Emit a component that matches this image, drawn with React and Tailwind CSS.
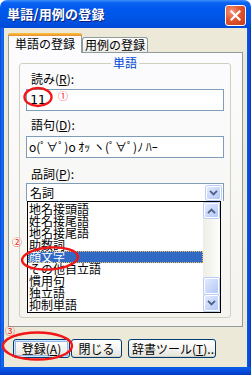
import React from "react";

function Chevron({ up }) {
  return (
    <svg width="9" height="6" viewBox="0 0 9 6">
      <path
        d={up ? "M1 5.2 L4.5 1.6 L8 5.2" : "M1 0.8 L4.5 4.4 L8 0.8"}
        fill="none"
        stroke="#4D6185"
        strokeWidth="1.8"
      />
    </svg>
  );
}

function XpBtn({ children, className }) {
  return (
    <div
      className={
        "flex items-center justify-center rounded-[2px] border border-white bg-gradient-to-br from-[#E2EAFE] to-[#B4C8F6] shadow-[0_0_0_1px_#B8CCF7] " +
        className
      }
    >
      {children}
    </div>
  );
}

function Button({ children, className, def }) {
  return (
    <div
      className={
        "h-[19px] flex items-center justify-center rounded-[3px] border border-[#003C74] bg-gradient-to-b from-[#FFFFFF] via-[#F5F4F0] to-[#E3E2DA] text-[12px] leading-[14px] text-black whitespace-nowrap overflow-hidden " +
        (def ? "shadow-[inset_0_0_0_1px_#CEE7FF,inset_0_0_0_2px_#98B8EA] " : "shadow-[inset_0_-1px_0_#D6D0C5] ") +
        className
      }
    >
      {children}
    </div>
  );
}

const items = [
  "地名接頭語",
  "姓名接尾語",
  "地名接尾語",
  "助数詞",
  "顔文字",
  "その他自立語",
  "慣用句",
  "独立語",
  "抑制単語",
];

export default function App() {
  return (
    <div className="relative w-[251px] h-[375px] overflow-hidden bg-white font-['Noto_Sans_CJK_JP','Noto_Sans',sans-serif] text-black">
      {/* title bar */}
      <div className="h-[28px] flex items-start justify-between pl-[7px] pr-[5px] rounded-t-[7px] bg-[linear-gradient(to_bottom,#3C8FFB_0%,#0A62F2_10%,#0058EE_30%,#0055E5_65%,#0049D8_100%)]">
        <span className="mt-[6px] text-white font-bold text-[13px] leading-[16px] tracking-[0.2px] [text-shadow:1px_1px_0_#0A1F7A]">
          単語/用例の登録
        </span>
        <div className="mt-[5px] w-[21px] h-[21px] rounded-[3px] border border-white bg-[radial-gradient(circle_at_30%_30%,#F39A80_0%,#E2552F_45%,#C63A17_100%)] flex items-center justify-center">
          <svg width="11" height="11" viewBox="0 0 11 11">
            <path d="M1.5 1.5 L9.5 9.5 M9.5 1.5 L1.5 9.5" stroke="white" strokeWidth="2.2" strokeLinecap="square" />
          </svg>
        </div>
      </div>

      {/* middle */}
      <div className="h-[339px] flex">
        <div className="w-[4px] bg-[linear-gradient(to_right,#0842C8,#166AF2_40%,#0A5AE8)]" />
        <div className="flex-1 bg-[#ECE9D8] flex flex-col">
          {/* tabs */}
          <div className="flex items-end pt-[5px] ml-[4px] h-[24px]">
            <div className="relative z-10 -mb-[1px] w-[74px] h-[20px] rounded-t-[3px] border-x border-[#919B9C] bg-[#FCFCFE] flex flex-col">
              <div className="h-[3px] -mx-[1px] rounded-t-[3px] bg-gradient-to-b from-[#FFC73C] to-[#E68B2C]" />
              <div className="flex-1 flex items-center justify-center text-[12px] leading-[14px] pb-[1px]">
                単語の登録
              </div>
            </div>
            <div className="w-[66px] h-[15px] rounded-t-[3px] border-x border-t border-[#919B9C] bg-gradient-to-b from-[#FFFFFF] to-[#ECEBE6] flex items-center justify-center text-[12px] leading-[14px]">
              用例の登録
            </div>
          </div>

          {/* panel */}
          <div className="ml-[4px] w-[235px] border border-[#919B9C] bg-gradient-to-b from-[#FCFCFE] to-[#F4F3EE] pt-[10px] pb-[8px] pl-[10px] pr-[11px]">
            <div className="border border-[#D0D0BF] rounded-[3px] flex flex-col pb-[4px]">
              <div className="-mt-[8px] flex justify-center">
                <span className="bg-[#FBFBFC] px-[2px] text-[12px] leading-[14px] text-[#0046D5]">単語</span>
              </div>
              <div className="mt-[2px] ml-[11px] text-[12px] leading-[14px] h-[14px]">
                読み(<span className="underline">R</span>):
              </div>
              <div className="mt-[3px] mx-[6px] h-[22px] border border-[#7F9DB9] bg-white flex items-center pl-[3px] text-[13px] leading-[14px] font-['DejaVu_Sans_Mono',monospace]">
                11
              </div>
              <div className="mt-[7px] ml-[11px] text-[12px] leading-[14px] h-[14px]">
                語句(<span className="underline">D</span>):
              </div>
              <div className="mt-[4px] mx-[6px] h-[22px] border border-[#7F9DB9] bg-white flex items-center pl-[2px] text-[12px] leading-[14px] whitespace-nowrap overflow-hidden">
                o(ﾟ∀ﾟ)o ｵｯ ヽ(ﾟ∀ﾟ)ﾉ ﾊｰ
              </div>
              <div className="mt-[9px] ml-[11px] text-[12px] leading-[14px] h-[14px]">
                品詞(<span className="underline">P</span>):
              </div>
              <div className="mt-[2px] mx-[6px] h-[18px] border-x border-t border-[#7F9DB9] bg-white flex items-start">
                <div className="flex-1 pl-[3px] pt-[2px] text-[12px] leading-[14px]">名詞</div>
                <XpBtn className="w-[15px] h-[14px] mt-[2px] mr-[2px]">
                  <Chevron />
                </XpBtn>
              </div>
              {/* dropdown list */}
              <div className="ml-[7px] w-[194px] h-[112px] border border-black bg-white flex overflow-hidden">
                <div className="flex-1 pt-[1px] flex flex-col">
                  {items.map((t, i) =>
                    i === 4 ? (
                      <div
                        key={t}
                        className="h-[12px] pl-[1px] bg-[#316AC5] text-white outline-1 outline-dotted outline-[#F5C35A] -outline-offset-1 text-[12px] leading-[12px] whitespace-nowrap"
                      >
                        {t}
                      </div>
                    ) : (
                      <div key={t} className="h-[12px] pl-[1px] text-[12px] leading-[12px] whitespace-nowrap">
                        {t}
                      </div>
                    )
                  )}
                </div>
                <div className="w-[17px] flex flex-col bg-gradient-to-r from-[#EEEDE5] to-[#FEFEFB]">
                  <XpBtn className="mt-[1px] h-[15px] mx-[1px]">
                    <Chevron up />
                  </XpBtn>
                  <div className="flex-1" />
                  <XpBtn className="h-[16px] mx-[1px]" />
                  <XpBtn className="mt-[1px] h-[16px] mx-[1px] mb-[1px]">
                    <Chevron />
                  </XpBtn>
                </div>
              </div>
            </div>
          </div>

          {/* buttons */}
          <div className="mt-[12px] ml-[9px] flex">
            <Button def className="w-[57px]">
              登録(<span className="underline">A</span>)
            </Button>
            <Button className="ml-[1px] w-[51px]">閉じる</Button>
            <Button className="ml-[6px] w-[88px] justify-start pl-[3px]">
              辞書ツール(<span className="underline">T</span>)...
            </Button>
          </div>
        </div>
        <div className="w-[4px] bg-[linear-gradient(to_right,#0A5AE8,#0848D8_60%,#0636B8)]" />
      </div>

      {/* bottom frame */}
      <div className="h-[8px] bg-[linear-gradient(to_bottom,#0A5CEA,#0850E0_40%,#0438C4)]" />

      {/* red annotations */}
      <svg className="absolute left-0 top-0 pointer-events-none" width="251" height="375">
        <ellipse cx="38" cy="97" rx="13.5" ry="9" fill="none" stroke="#F21616" strokeWidth="2.4" />
        <ellipse cx="50" cy="258.5" rx="28" ry="11" fill="none" stroke="#F21616" strokeWidth="2.4" transform="rotate(-4 50 258.5)" />
        <ellipse cx="37.5" cy="346" rx="34.5" ry="13.5" fill="none" stroke="#F21616" strokeWidth="2.4" />
      </svg>
      <span className="absolute left-[58px] top-[90px] text-[10px] leading-[12px] text-[#F21616]">①</span>
      <span className="absolute left-[12px] top-[236px] text-[10px] leading-[12px] text-[#F21616]">②</span>
      <span className="absolute left-[5px] top-[325px] text-[10px] leading-[12px] text-[#F21616]">③</span>
    </div>
  );
}
